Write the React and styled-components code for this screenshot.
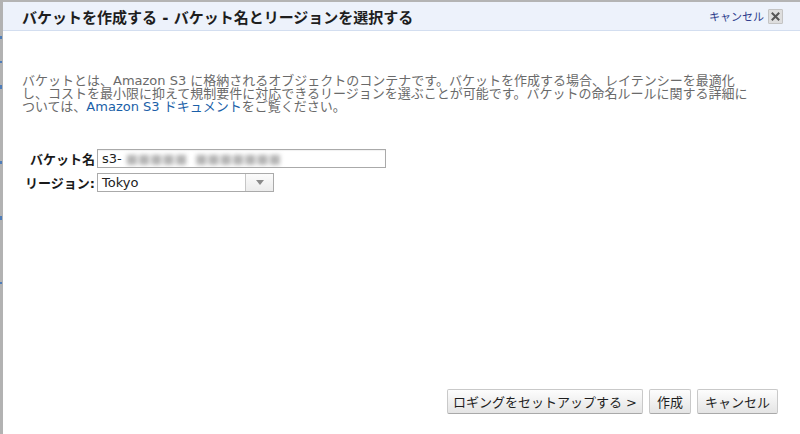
import React from 'react';
import styled, { createGlobalStyle } from 'styled-components';

const GlobalStyle = createGlobalStyle`
  html, body {
    margin: 0;
    padding: 0;
    background: #a9a9a9;
  }
  body {
    font-family: "DejaVu Sans", "Noto Sans CJK JP", sans-serif;
  }
`;

const FONT = `"DejaVu Sans", "Noto Sans CJK JP", sans-serif`;

const Page = styled.div`
  display: flex;
  width: 800px;
  height: 434px;
  overflow: hidden;
  background: #b4b4b4;
`;

const Edge = styled.div`
  width: 3px;
  display: flex;
  flex-direction: column;
  gap: 22px;
  padding-top: 36px;
  background: #b2b2b2;
`;

const EdgeMark = styled.span`
  display: block;
  width: 2px;
  height: ${(p) => p.h || 3}px;
  margin-top: ${(p) => p.gap || 0}px;
  background: #4f7db8;
`;

const Dialog = styled.div`
  flex: 1;
  display: flex;
  flex-direction: column;
  margin-top: 2px;
  background: #fff;
`;

const TitleBar = styled.div`
  height: 28px;
  display: flex;
  align-items: center;
  justify-content: space-between;
  padding: 0 17px 0 19px;
  background: #edf2fb;
  border-bottom: 1px solid #d3def0;
`;

const Title = styled.h1`
  margin: 0;
  font-family: ${FONT};
  font-size: 15px;
  font-weight: bold;
  color: #1e1e1e;
`;

const TitleActions = styled.div`
  display: flex;
  align-items: center;
  gap: 4px;
`;

const CancelLink = styled.a`
  font-family: ${FONT};
  font-size: 11px;
  color: #2c3c8c;
  text-decoration: none;
  cursor: pointer;
`;

const CloseBox = styled.button`
  width: 15px;
  height: 15px;
  padding: 0;
  display: flex;
  align-items: center;
  justify-content: center;
  background: #dedede;
  border: 1px solid #c4c4c4;
  border-radius: 1px;
`;

const Body = styled.div`
  flex: 1;
  display: flex;
  flex-direction: column;
  padding: 43px 20px 0 19px;
`;

const Intro = styled.p`
  margin: 0;
  font-family: ${FONT};
  font-size: 13px;
  line-height: 13px;
  color: #6a6a6a;
  white-space: nowrap;
`;

const DocLink = styled.a`
  color: #1b5fa8;
  text-decoration: none;
`;

const Form = styled.div`
  display: grid;
  grid-template-columns: 73px auto;
  row-gap: 5px;
  column-gap: 2px;
  align-items: center;
  margin-top: 36px;
  justify-content: start;
`;

const Label = styled.label`
  font-family: ${FONT};
  font-size: 13px;
  font-weight: bold;
  color: #1a1a1a;
  text-align: right;
  white-space: nowrap;
`;

const TextBox = styled.div`
  width: 283px;
  height: 17px;
  display: flex;
  align-items: center;
  padding-left: 4px;
  border: 1px solid #aaaaaa;
  box-shadow: inset 0 1px 1px rgba(0, 0, 0, 0.06);
  font-family: ${FONT};
  font-size: 13px;
  color: #222;
  white-space: nowrap;
  overflow: hidden;
`;

const Blurred = styled.span`
  color: #b4b4b4;
  filter: blur(2.2px);
  margin-left: ${(p) => p.gap || 0}px;
`;

const Select = styled.div`
  width: 175px;
  height: 17px;
  display: flex;
  border: 1px solid #aaaaaa;
  font-family: ${FONT};
  font-size: 13px;
  color: #222;
`;

const SelectValue = styled.div`
  flex: 1;
  display: flex;
  align-items: center;
  padding-left: 4px;
`;

const SelectArrow = styled.div`
  width: 27px;
  display: flex;
  align-items: center;
  justify-content: center;
  border-left: 1px solid #c6c6c6;
  background: linear-gradient(#fbfbfb, #ececec);
`;

const Footer = styled.div`
  display: flex;
  justify-content: flex-end;
  gap: 6px;
  padding: 0 22px 20px 0;
`;

const Button = styled.button`
  height: 25px;
  padding: 0 ${(p) => p.pad || 8}px;
  font-family: ${FONT};
  font-size: 13px;
  color: #1e1e1e;
  background: linear-gradient(#fdfdfd, #e4e4e4);
  border: 1px solid #c9c9c9;
  border-bottom-color: #a9a9a9;
  border-radius: 2px;
  white-space: nowrap;
  cursor: pointer;
`;

export default function App() {
  return (
    <>
      <GlobalStyle />
      <Page>
        <Edge>
          <EdgeMark h={3} />
          <EdgeMark h={2} />
          <EdgeMark h={4} />
          <EdgeMark h={3} gap={50} />
          <EdgeMark h={4} gap={30} />
          <EdgeMark h={2} gap={40} />
        </Edge>
        <Dialog>
          <TitleBar>
            <Title>バケットを作成する - バケット名とリージョンを選択する</Title>
            <TitleActions>
              <CancelLink>キャンセル</CancelLink>
              <CloseBox aria-label="閉じる">
                <svg width="9" height="9" viewBox="0 0 9 9">
                  <path d="M1.5 1.5 L7.5 7.5 M7.5 1.5 L1.5 7.5" stroke="#555" strokeWidth="2" strokeLinecap="square" />
                </svg>
              </CloseBox>
            </TitleActions>
          </TitleBar>
          <Body>
            <Intro>
              バケットとは、Amazon S3 に格納されるオブジェクトのコンテナです。バケットを作成する場合、レイテンシーを最適化
              <br />
              し、コストを最小限に抑えて規制要件に対応できるリージョンを選ぶことが可能です。バケットの命名ルールに関する詳細に
              <br />
              ついては、<DocLink>Amazon S3 ドキュメント</DocLink>をご覧ください。
            </Intro>
            <Form>
              <Label>バケット名</Label>
              <TextBox>
                s3-<Blurred gap={4}>■■■■■</Blurred>
                <Blurred gap={8}>■■■■■■■</Blurred>
              </TextBox>
              <Label>リージョン:</Label>
              <Select>
                <SelectValue>Tokyo</SelectValue>
                <SelectArrow>
                  <svg width="8" height="5" viewBox="0 0 8 5">
                    <path d="M0 0 H8 L4 5 Z" fill="#8a8a8a" />
                  </svg>
                </SelectArrow>
              </Select>
            </Form>
          </Body>
          <Footer>
            <Button pad={5}>ロギングをセットアップする &gt;</Button>
            <Button pad={7}>作成</Button>
            <Button pad={7}>キャンセル</Button>
          </Footer>
        </Dialog>
      </Page>
    </>
  );
}
